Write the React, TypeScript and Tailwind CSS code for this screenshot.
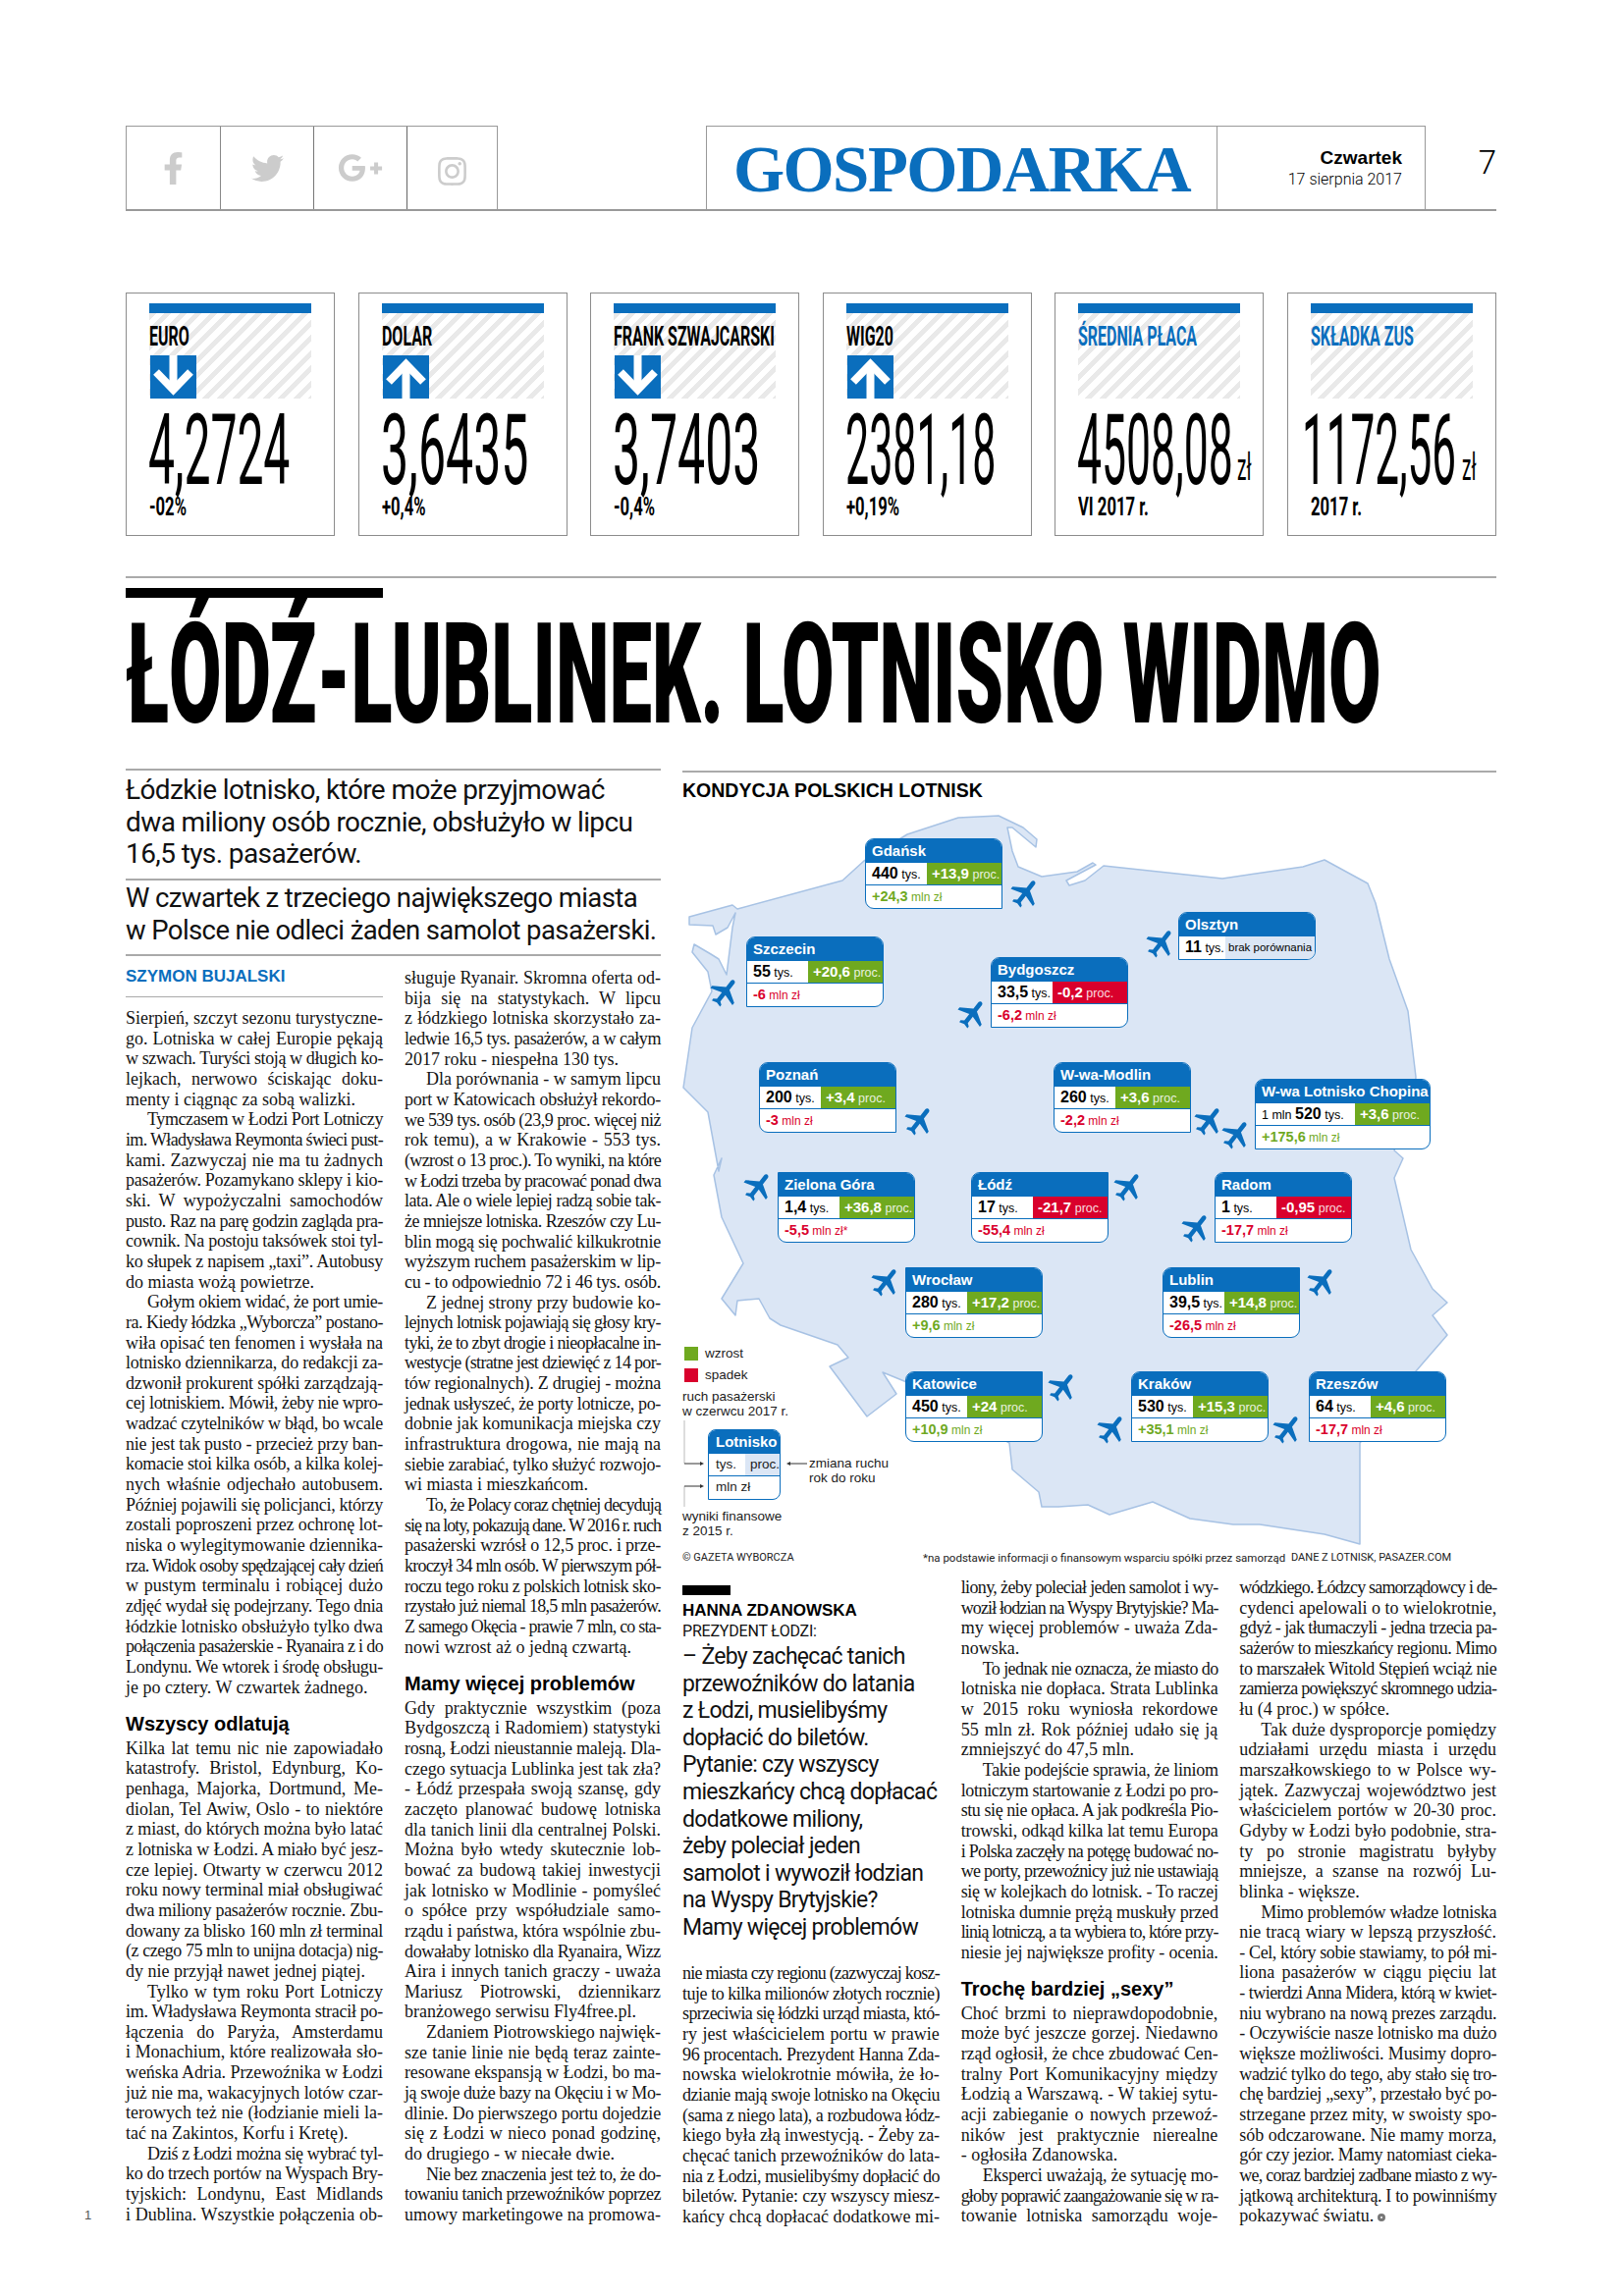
import { useLayoutEffect, useRef } from 'react';
import { FaFacebookF, FaGooglePlusG, FaInstagram, FaTwitter } from 'react-icons/fa';
import { MdFlight } from 'react-icons/md';

const COLUMN_1 = `Sierpień, szczyt sezonu turystyczne-
go. Lotniska w całej Europie pękają
w szwach. Turyści stoją w długich ko-
lejkach, nerwowo ściskając doku-
menty i ciągnąc za sobą walizki.$
>Tymczasem w Łodzi Port Lotniczy
im. Władysława Reymonta świeci pust-
kami. Zazwyczaj nie ma tu żadnych
pasażerów. Pozamykano sklepy i kio-
ski. W wypożyczalni samochodów
pusto. Raz na parę godzin zagląda pra-
cownik. Na postoju taksówek stoi tyl-
ko słupek z napisem „taxi”. Autobusy
do miasta wożą powietrze.$
>Gołym okiem widać, że port umie-
ra. Kiedy łódzka „Wyborcza” postano-
wiła opisać ten fenomen i wysłała na
lotnisko dziennikarza, do redakcji za-
dzwonił prokurent spółki zarządzają-
cej lotniskiem. Mówił, żeby nie wpro-
wadzać czytelników w błąd, bo wcale
nie jest tak pusto - przecież przy ban-
komacie stoi kilka osób, a kilka kolej-
nych właśnie odjechało autobusem.
Później pojawili się policjanci, którzy
zostali poproszeni przez ochronę lot-
niska o wylegitymowanie dziennika-
rza. Widok osoby spędzającej cały dzień
w pustym terminalu i robiącej dużo
zdjęć wydał się podejrzany. Tego dnia
łódzkie lotnisko obsłużyło tylko dwa
połączenia pasażerskie - Ryanaira z i do
Londynu. We wtorek i środę obsługu-
je po cztery. W czwartek żadnego.$
## Wszyscy odlatują
Kilka lat temu nic nie zapowiadało
katastrofy. Bristol, Edynburg, Ko-
penhaga, Majorka, Dortmund, Me-
diolan, Tel Awiw, Oslo - to niektóre
z miast, do których można było latać
z lotniska w Łodzi. A miało być jesz-
cze lepiej. Otwarty w czerwcu 2012
roku nowy terminal miał obsługiwać
dwa miliony pasażerów rocznie. Zbu-
dowany za blisko 160 mln zł terminal
(z czego 75 mln to unijna dotacja) nig-
dy nie przyjął nawet jednej piątej.$
>Tylko w tym roku Port Lotniczy
im. Władysława Reymonta stracił po-
łączenia do Paryża, Amsterdamu
i Monachium, które realizowała sło-
weńska Adria. Przewoźnika w Łodzi
już nie ma, wakacyjnych lotów czar-
terowych też nie (łodzianie mieli la-
tać na Zakintos, Korfu i Kretę).$
>Dziś z Łodzi można się wybrać tyl-
ko do trzech portów na Wyspach Bry-
tyjskich: Londynu, East Midlands
i Dublina. Wszystkie połączenia ob-`;

const COLUMN_2 = `sługuje Ryanair. Skromna oferta od-
bija się na statystykach. W lipcu
z łódzkiego lotniska skorzystało za-
ledwie 16,5 tys. pasażerów, a w całym
2017 roku - niespełna 130 tys.$
>Dla porównania - w samym lipcu
port w Katowicach obsłużył rekordo-
we 539 tys. osób (23,9 proc. więcej niż
rok temu), a w Krakowie - 553 tys.
(wzrost o 13 proc.). To wyniki, na które
w Łodzi trzeba by pracować ponad dwa
lata. Ale o wiele lepiej radzą sobie tak-
że mniejsze lotniska. Rzeszów czy Lu-
blin mogą się pochwalić kilkukrotnie
wyższym ruchem pasażerskim w lip-
cu - to odpowiednio 72 i 46 tys. osób.$
>Z jednej strony przy budowie ko-
lejnych lotnisk pojawiają się głosy kry-
tyki, że to zbyt drogie i nieopłacalne in-
westycje (stratne jest dziewięć z 14 por-
tów regionalnych). Z drugiej - można
jednak usłyszeć, że porty lotnicze, po-
dobnie jak komunikacja miejska czy
infrastruktura drogowa, nie mają na
siebie zarabiać, tylko służyć rozwojo-
wi miasta i mieszkańcom.$
>To, że Polacy coraz chętniej decydują
się na loty, pokazują dane. W 2016 r. ruch
pasażerski wzrósł o 12,5 proc. i prze-
kroczył 34 mln osób. W pierwszym pół-
roczu tego roku z polskich lotnisk sko-
rzystało już niemal 18,5 mln pasażerów.
Z samego Okęcia - prawie 7 mln, co sta-
nowi wzrost aż o jedną czwartą.$
## Mamy więcej problemów
Gdy praktycznie wszystkim (poza
Bydgoszczą i Radomiem) statystyki
rosną, Łodzi nieustannie maleją. Dla-
czego sytuacja Lublinka jest tak zła?
- Łódź przespała swoją szansę, gdy
zaczęto planować budowę lotniska
dla tanich linii dla centralnej Polski.
Można było wtedy skutecznie lob-
bować za budową takiej inwestycji
jak lotnisko w Modlinie - pomyśleć
o spółce przy współudziale samo-
rządu i państwa, która wspólnie zbu-
dowałaby lotnisko dla Ryanaira, Wizz
Aira i innych tanich graczy - uważa
Mariusz Piotrowski, dziennikarz
branżowego serwisu Fly4free.pl.$
>Zdaniem Piotrowskiego najwięk-
sze tanie linie nie będą teraz zainte-
resowane ekspansją w Łodzi, bo ma-
ją swoje duże bazy na Okęciu i w Mo-
dlinie. Do pierwszego portu dojedzie
się z Łodzi w nieco ponad godzinę,
do drugiego - w niecałe dwie.$
>Nie bez znaczenia jest też to, że do-
towaniu tanich przewoźników poprzez
umowy marketingowe na promowa-`;

const COLUMN_3 = `nie miasta czy regionu (zazwyczaj kosz-
tuje to kilka milionów złotych rocznie)
sprzeciwia się łódzki urząd miasta, któ-
ry jest właścicielem portu w prawie
96 procentach. Prezydent Hanna Zda-
nowska wielokrotnie mówiła, że ło-
dzianie mają swoje lotnisko na Okęciu
(sama z niego lata), a rozbudowa łódz-
kiego była złą inwestycją. - Żeby za-
chęcać tanich przewoźników do lata-
nia z Łodzi, musielibyśmy dopłacić do
biletów. Pytanie: czy wszyscy miesz-
kańcy chcą dopłacać dodatkowe mi-`;

const COLUMN_4 = `liony, żeby poleciał jeden samolot i wy-
woził łodzian na Wyspy Brytyjskie? Ma-
my więcej problemów - uważa Zda-
nowska.$
>To jednak nie oznacza, że miasto do
lotniska nie dopłaca. Strata Lublinka
w 2015 roku wyniosła rekordowe
55 mln zł. Rok później udało się ją
zmniejszyć do 47,5 mln.$
>Takie podejście sprawia, że liniom
lotniczym startowanie z Łodzi po pro-
stu się nie opłaca. A jak podkreśla Pio-
trowski, odkąd kilka lat temu Europa
i Polska zaczęły na potęgę budować no-
we porty, przewoźnicy już nie ustawiają
się w kolejkach do lotnisk. - To raczej
lotniska dumnie prężą muskuły przed
linią lotniczą, a ta wybiera to, które przy-
niesie jej największe profity - ocenia.$
## Trochę bardziej „sexy”
Choć brzmi to nieprawdopodobnie,
może być jeszcze gorzej. Niedawno
rząd ogłosił, że chce zbudować Cen-
tralny Port Komunikacyjny między
Łodzią a Warszawą. - W takiej sytu-
acji zabieganie o nowych przewoź-
ników jest praktycznie nierealne
- ogłosiła Zdanowska.$
>Eksperci uważają, że sytuację mo-
głoby poprawić zaangażowanie się w ra-
towanie lotniska samorządu woje-`;

const COLUMN_5 = `wódzkiego. Łódzcy samorządowcy i de-
cydenci apelowali o to wielokrotnie,
gdyż - jak tłumaczyli - jedna trzecia pa-
sażerów to mieszkańcy regionu. Mimo
to marszałek Witold Stępień wciąż nie
zamierza powiększyć skromnego udzia-
łu (4 proc.) w spółce.$
>Tak duże dysproporcje pomiędzy
udziałami urzędu miasta i urzędu
marszałkowskiego to w Polsce wy-
jątek. Zazwyczaj województwo jest
właścicielem portów w 20-30 proc.
Gdyby w Łodzi było podobnie, stra-
ty po stronie magistratu byłyby
mniejsze, a szanse na rozwój Lu-
blinka - większe.$
>Mimo problemów władze lotniska
nie tracą wiary w lepszą przyszłość.
- Cel, który sobie stawiamy, to pół mi-
liona pasażerów w ciągu pięciu lat
- twierdzi Anna Midera, którą w kwiet-
niu wybrano na nową prezes zarządu.
- Oczywiście nasze lotnisko ma dużo
większe możliwości. Musimy dopro-
wadzić tylko do tego, aby stało się tro-
chę bardziej „sexy”, przestało być po-
strzegane przez mity, w swoisty spo-
sób odczarowane. Nie mamy morza,
gór czy jezior. Mamy natomiast cieka-
we, coraz bardziej zadbane miasto z wy-
jątkową architekturą. I to powinniśmy
pokazywać światu.$`;

const TICKERS = [
  { label: 'EURO', blue: false, arrow: 'down', value: '4,2724', fit: 'scale-x-[0.48]', sub: '-02%' },
  { label: 'DOLAR', blue: false, arrow: 'up', value: '3,6435', fit: 'scale-x-[0.5]', sub: '+0,4%' },
  { label: 'FRANK SZWAJCARSKI', blue: false, arrow: 'down', value: '3,7403', fit: 'scale-x-[0.5]', sub: '-0,4%' },
  { label: 'WIG20', blue: false, arrow: 'up', value: '2381,18', fit: 'scale-x-[0.43]', sub: '+0,19%' },
  { label: 'ŚREDNIA PŁACA', blue: true, value: '4508,08', fit: 'scale-x-[0.445]', unit: true, sub: 'VI 2017 r.' },
  { label: 'SKŁADKA ZUS', blue: true, value: '1172,56', fit: 'scale-x-[0.44]', unit: true, sub: '2017 r.', shift: true },
];

const AIRPORTS = [
  { name: 'Gdańsk', tys: '440', change: '+13,9', up: true, money: '+24,3', gain: true, pos: 'left-[186px] top-[22px]', corners: 'rounded-t-[9px] rounded-bl-[9px]', plane: 'left-[332px] top-[60px]' },
  { name: 'Szczecin', tys: '55', change: '+20,6', up: true, money: '-6', gain: false, pos: 'left-[65px] top-[122px]', corners: 'rounded-t-[9px] rounded-br-[9px]', plane: 'left-[26px] top-[161px]' },
  { name: 'Bydgoszcz', tys: '33,5', change: '-0,2', up: false, money: '-6,2', gain: false, pos: 'left-[314px] top-[143px]', corners: 'rounded-t-[9px] rounded-br-[9px]', plane: 'left-[278px] top-[183px]' },
  { name: 'Poznań', tys: '200', change: '+3,4', up: true, money: '-3', gain: false, pos: 'left-[78px] top-[250px]', corners: 'rounded-t-[9px] rounded-bl-[9px]', plane: 'left-[224px] top-[292px]' },
  { name: 'W-wa-Modlin', tys: '260', change: '+3,6', up: true, money: '-2,2', gain: false, pos: 'left-[378px] top-[250px]', corners: 'rounded-t-[9px] rounded-bl-[9px]', plane: 'left-[519px] top-[292px]' },
  { name: 'Zielona Góra', tys: '1,4', change: '+36,8', up: true, money: '-5,5', star: true, gain: false, pos: 'left-[97px] top-[362px]', corners: 'rounded-tr-[9px] rounded-b-[9px]', plane: 'left-[60px] top-[359px]' },
  { name: 'Łódź', tys: '17', change: '-21,7', up: false, money: '-55,4', gain: false, pos: 'left-[294px] top-[362px]', corners: 'rounded-tl-[9px] rounded-b-[9px]', plane: 'left-[437px] top-[359px]' },
  { name: 'Radom', tys: '1', change: '-0,95', up: false, money: '-17,7', gain: false, pos: 'left-[542px] top-[362px]', corners: 'rounded-t-[9px] rounded-br-[9px]', plane: 'left-[506px] top-[401px]' },
  { name: 'Wrocław', tys: '280', change: '+17,2', up: true, money: '+9,6', gain: true, pos: 'left-[227px] top-[459px]', corners: 'rounded-tr-[9px] rounded-b-[9px]', plane: 'left-[190px] top-[456px]' },
  { name: 'Lublin', tys: '39,5', change: '+14,8', up: true, money: '-26,5', gain: false, pos: 'left-[489px] top-[459px]', corners: 'rounded-tl-[9px] rounded-b-[9px]', plane: 'left-[634px] top-[456px]' },
  { name: 'Katowice', tys: '450', change: '+24', up: true, money: '+10,9', gain: true, pos: 'left-[227px] top-[565px]', corners: 'rounded-tl-[9px] rounded-b-[9px]', plane: 'left-[370px] top-[563px]' },
  { name: 'Kraków', tys: '530', change: '+15,3', up: true, money: '+35,1', gain: true, pos: 'left-[457px] top-[565px]', corners: 'rounded-t-[9px] rounded-br-[9px]', plane: 'left-[420px] top-[606px]' },
  { name: 'Rzeszów', tys: '64', change: '+4,6', up: true, money: '-17,7', gain: false, pos: 'left-[638px] top-[565px]', corners: 'rounded-t-[9px] rounded-br-[9px]', plane: 'left-[599px] top-[606px]' },
];

const POLAND =
  '702,934 746,922 751,926 858,897 880,877 924,850 976,833 1017,831 1042,843 1056,855 1055,863 1031,843 1026,843 1031,867 1037,883 1061,893 1097,888 1113,879 1116,881 1086,897 1089,902 1105,897 1124,882 1245,895 1327,883 1349,876 1360,882 1393,900 1401,920 1415,977 1434,1030 1442,1097 1440,1130 1420,1172 1429,1180 1420,1200 1437,1273 1459,1313 1474,1327 1459,1340 1474,1360 1448,1390 1442,1397 1385,1470 1385,1573 1349,1563 1283,1553 1256,1553 1212,1547 1174,1530 1130,1543 1108,1533 1078,1535 1061,1535 1058,1520 1031,1497 1028,1470 921,1407 899,1398 913,1420 883,1443 845,1392 864,1383 853,1370 795,1350 784,1343 773,1323 751,1325 749,1340 735,1323 757,1287 735,1240 727,1197 735,1180 732,1193 721,1133 696,1108 705,1047 725,1010 721,990 705,970 707,962 724,972 732,977 740,993 746,945 749,930 741,945 729,952 726,943 702,942';

function Line({ text, last, indent, mark }: { text: string; last: boolean; indent: boolean; mark: boolean }) {
  const ref = useRef<HTMLSpanElement>(null);

  // squeeze the lines that would not fit the column, as a typesetter does
  useLayoutEffect(() => {
    const span = ref.current;
    if (!span || !span.parentElement) return;
    const room = span.parentElement.clientWidth - (indent ? 22 : 0);
    const over = span.getBoundingClientRect().width - room;
    if (over > 0) span.style.letterSpacing = `${-over / text.length}px`;
  }, [text, indent]);

  return (
    <div
      className={`h-[20.67px] whitespace-nowrap ${indent ? 'pl-[22px]' : ''} ${
        last ? 'text-left' : 'text-justify [text-align-last:justify]'
      }`}
    >
      <span ref={ref}>{text}</span>
      {mark && <span className="ml-[4px] inline-block size-[8px] rounded-full border-[3px] border-[#777]" />}
    </div>
  );
}

function Column({ text, end }: { text: string; end?: boolean }) {
  const lines = text.split('\n');

  return (
    <div className="font-['Liberation_Serif',serif] text-[18px] leading-[20.67px] text-[#141414]">
      {lines.map((line, i) => {
        if (line.startsWith('## ')) {
          return (
            <div key={i} className="flex h-[41.34px] items-end pb-[3px] font-['Liberation_Sans',sans-serif] text-[20px] leading-[24px] font-bold text-black">
              {line.slice(3)}
            </div>
          );
        }
        const indent = line.startsWith('>');
        const last = line.endsWith('$');
        return (
          <Line
            key={i}
            text={line.replace(/^>/, '').replace(/\$$/, '')}
            last={last}
            indent={indent}
            mark={!!end && i === lines.length - 1}
          />
        );
      })}
    </div>
  );
}

function ArrowBox({ dir }: { dir: string }) {
  return (
    <svg viewBox="0 0 47 44" className={`ml-[1px] mt-[5px] h-[44px] w-[47px] ${dir === 'up' ? 'rotate-180' : ''}`}>
      <rect width="47" height="44" fill="#0a6ebd" />
      <rect x="19.5" width="8" height="30" fill="#fff" />
      <path d="M6 17 L23.5 35 L41 17" fill="none" stroke="#fff" strokeWidth="8" />
    </svg>
  );
}

function Ticker({ t }: { t: (typeof TICKERS)[number] }) {
  return (
    <div className="h-[248px] w-[213px] border border-[#8c8c8c] pl-[23px] pt-[10px] font-['Roboto',sans-serif] text-black">
      <div className="h-[10px] w-[165px] bg-[#0a6ebd]" />
      <div className="h-[87px] w-[165px] bg-[repeating-linear-gradient(135deg,#e9e9e9_0_5px,#fff_5px_11px)] pt-[10px]">
        <div className={`h-[28px] origin-left scale-x-[0.57] whitespace-nowrap text-[28px] leading-[28px] font-bold ${t.blue ? 'text-[#0a6ebd]' : 'text-black'}`}>
          {t.label}
        </div>
        {t.arrow && <ArrowBox dir={t.arrow} />}
      </div>
      <div className={`mt-[10px] flex h-[86px] items-end ${t.shift ? '-ml-[9px]' : '-ml-[1px]'}`}>
        <div className="w-[163px] shrink-0">
          <div className={`origin-left whitespace-nowrap text-[100px] leading-[86px] ${t.fit}`}>{t.value}</div>
        </div>
        {t.unit && <div className="origin-left scale-x-[0.5] pb-[7px] text-[38px] leading-[38px]">zł</div>}
      </div>
      <div className="mt-[1px] h-[26px] origin-left scale-x-[0.64] whitespace-nowrap text-[26px] leading-[26px] font-bold">{t.sub}</div>
    </div>
  );
}

function Card({ a }: { a: (typeof AIRPORTS)[number] }) {
  return (
    <div className={`absolute w-[140px] overflow-hidden border border-[#0a6ebd] bg-white ${a.pos} ${a.corners}`}>
      <div className="h-[24px] bg-[#0a6ebd] pl-[6px] text-[15px] leading-[24px] font-bold text-white">{a.name}</div>
      <div className="flex h-[23px] border-b border-[#0a6ebd]">
        <div className="w-[62px] pl-[6px] text-[12.5px] leading-[22px] text-black">
          <b className="text-[16px]">{a.tys}</b> tys.
        </div>
        <div className={`flex-1 pl-[5px] text-[12.5px] leading-[22px] text-white ${a.up ? 'bg-[#6fa91f]' : 'bg-[#d9002c]'}`}>
          <b className="text-[15px]">{a.change}</b> <span className="opacity-85">proc.</span>
        </div>
      </div>
      <div className={`h-[23px] pl-[6px] text-[12px] leading-[23px] ${a.gain ? 'text-[#6fa91f]' : 'text-[#d9002c]'}`}>
        <b className="text-[14.5px]">{a.money}</b> mln zł{a.star ? '*' : ''}
      </div>
    </div>
  );
}

function Plane({ pos }: { pos: string }) {
  return <MdFlight className={`absolute size-[36px] rotate-[38deg] text-[#0a6ebd] ${pos}`} />;
}

function Legend() {
  return (
    <div className="absolute left-0 top-[539px] w-[210px] text-[13.5px] leading-[15px] text-[#1c1c1c]">
      <div className="ml-[2px] flex items-center gap-[7px]">
        <span className="size-[14px] bg-[#6fa91f]" />
        wzrost
      </div>
      <div className="ml-[2px] mt-[7px] flex items-center gap-[7px]">
        <span className="size-[14px] bg-[#d9002c]" />
        spadek
      </div>
      <div className="mt-[7px]">
        ruch pasażerski
        <br />w czerwcu 2017 r.
      </div>
      <div className="relative mt-[11px] flex h-[72px] pl-[26px]">
        <div className="w-[76px] overflow-hidden rounded-t-[8px] rounded-br-[8px] border border-[#0a6ebd]">
          <div className="h-[24px] bg-[#0a6ebd] pl-[7px] text-[15px] leading-[24px] font-bold text-white">Lotnisko</div>
          <div className="flex h-[23px] border-b border-[#0a6ebd] leading-[22px]">
            <div className="w-[38px] pl-[7px]">tys.</div>
            <div className="flex-1 bg-[#dbe6f5] pl-[5px]">proc.</div>
          </div>
          <div className="pl-[7px] leading-[22px]">mln zł</div>
        </div>
        <div className="ml-[29px] mt-[27px] whitespace-nowrap">
          zmiana ruchu
          <br />
          rok do roku
        </div>
      </div>
      <div className="mt-[9px]">
        wyniki finansowe
        <br />z 2015 r.
      </div>
      <svg className="absolute left-0 top-[76px] h-[96px] w-[130px]" viewBox="0 0 130 96" fill="none">
        <path d="M2 0 V44" stroke="#bbb" />
        <path d="M2 88 V67" stroke="#bbb" />
        <path d="M2 44 H18M2 67 H18M127 44 H110" stroke="#333" />
        <path d="M18 42 L22 44 L18 46ZM18 65 L22 67 L18 69ZM110 42 L106 44 L110 46Z" fill="#333" />
      </svg>
    </div>
  );
}

export default function App() {
  return (
    <div className="relative h-[2339px] w-[1653px] overflow-hidden bg-white pl-[128px] pt-[128px] font-['Liberation_Sans',sans-serif]">
      <div className="w-[1396px]">
        {/* section header */}
        <header className="flex h-[87px] border-b-2 border-[#999]">
          <div className="flex w-[379px] border-x border-t border-[#999] text-[#ccc]">
            <div className="flex w-[95px] items-center justify-center"><FaFacebookF size={33} /></div>
            <div className="flex w-[95px] items-center justify-center border-l border-[#888]"><FaTwitter size={33} /></div>
            <div className="flex w-[95px] items-center justify-center border-l border-[#777]"><FaGooglePlusG size={46} /></div>
            <div className="flex flex-1 items-center justify-center border-l border-[#666] pt-[6px]"><FaInstagram size={33} /></div>
          </div>
          <div className="ml-[212px] flex w-[521px] items-center justify-center border-x border-t border-[#999] pt-[3px]">
            <span className="font-['Liberation_Serif',serif] text-[67px] leading-[67px] font-bold tracking-[-1.5px] text-[#0a6ebd]">GOSPODARKA</span>
          </div>
          <div className="w-[212px] border-r border-t border-[#999] pr-[23px] pt-[21px] text-right">
            <div className="text-[19px] leading-[22px] font-bold">Czwartek</div>
            <div className="font-['Roboto',sans-serif] text-[16px] leading-[22px] font-light">17 sierpnia 2017</div>
          </div>
          <div className="flex-1 pt-[18px] text-right font-['Roboto',sans-serif] text-[33px] leading-[40px] font-light">7</div>
        </header>

        {/* tickers */}
        <div className="mt-[83px] flex justify-between">
          {TICKERS.map((t) => (
            <Ticker key={t.label} t={t} />
          ))}
        </div>

        <div className="mt-[41px] h-[2px] bg-[#aaa]" />
        <div className="mt-[10px] h-[10px] w-[262px] bg-black" />
        <h1 className="h-[174px] origin-left scale-x-[0.547] whitespace-nowrap pt-[8px] font-['Roboto',sans-serif] text-[142px] leading-[142px] font-black text-black">
          ŁÓDŹ-LUBLINEK. LOTNISKO WIDMO
        </h1>

        <div className="flex gap-[22px]">
          {/* lede and article */}
          <div className="w-[545px]">
            <div className="border-t-2 border-[#aaa] pb-[8.5px] pt-[4px] font-['Roboto',sans-serif] text-[28px] leading-[32.5px] tracking-[-0.6px] whitespace-nowrap text-[#111]">
              Łódzkie lotnisko, które może przyjmować
              <br />
              dwa miliony osób rocznie, obsłużyło w lipcu
              <br />
              16,5 tys. pasażerów.
            </div>
            <div className="border-t-2 border-[#aaa] pb-[8px] pt-[2px] font-['Roboto',sans-serif] text-[27.5px] leading-[32.5px] tracking-[-0.6px] whitespace-nowrap text-[#111]">
              W czwartek z trzeciego największego miasta
              <br />w Polsce nie odleci żaden samolot pasażerski.
            </div>
            <div className="flex gap-[22px] border-t-2 border-[#aaa]">
              <div className="w-[262px]">
                <div className="mb-[11px] h-[42px] border-b border-[#aaa] pt-[11px] text-[17px] leading-[20px] font-bold text-[#0a6ebd]">SZYMON BUJALSKI</div>
                <Column text={COLUMN_1} />
              </div>
              <div className="w-[261px] pt-[12px]">
                <Column text={COLUMN_2} />
              </div>
            </div>
          </div>

          {/* graphic and the rest of the article */}
          <div className="w-[829px]">
            <div className="mt-[2px] h-[47px] border-t-2 border-[#aaa] pt-[7px] text-[19.5px] leading-[22px] font-bold text-black">KONDYCJA POLSKICH LOTNISK</div>

            <div className="relative h-[745px]">
              <svg className="absolute inset-0 overflow-visible" width="830" height="745" viewBox="695 832 830 745">
                <polygon points={POLAND} fill="#dbe6f5" stroke="#a7c2e4" strokeWidth="1.5" strokeLinejoin="round" />
              </svg>
              {AIRPORTS.map((a) => (
                <Plane key={a.name} pos={a.plane} />
              ))}
              {AIRPORTS.map((a) => (
                <Card key={a.name} a={a} />
              ))}
              <Plane pos="left-[470px] top-[111px]" />
              <div className="absolute left-[505px] top-[97px] w-[140px] overflow-hidden rounded-t-[9px] rounded-br-[9px] border border-[#0a6ebd] bg-white">
                <div className="h-[24px] bg-[#0a6ebd] pl-[6px] text-[15px] leading-[24px] font-bold text-white">Olsztyn</div>
                <div className="flex h-[23px] text-black">
                  <div className="w-[47px] pl-[6px] text-[12.5px] leading-[22px]">
                    <b className="text-[16px]">11</b> tys.
                  </div>
                  <div className="flex-1 whitespace-nowrap bg-[#dbe6f5] pl-[3px] text-[11.5px] leading-[22px]">brak porównania</div>
                </div>
              </div>
              <Plane pos="left-[547px] top-[306px]" />
              <div className="absolute left-[583px] top-[267px] w-[179px] overflow-hidden rounded-t-[9px] rounded-br-[9px] border border-[#0a6ebd] bg-white">
                <div className="h-[24px] bg-[#0a6ebd] pl-[6px] text-[15px] leading-[24px] font-bold whitespace-nowrap text-white">W-wa Lotnisko Chopina</div>
                <div className="flex h-[23px] border-b border-[#0a6ebd]">
                  <div className="w-[101px] pl-[6px] text-[12.5px] leading-[22px] text-black">
                    1 mln <b className="text-[16px]">520</b> tys.
                  </div>
                  <div className="flex-1 bg-[#6fa91f] pl-[5px] text-[12.5px] leading-[22px] text-white">
                    <b className="text-[15px]">+3,6</b> <span className="opacity-85">proc.</span>
                  </div>
                </div>
                <div className="h-[23px] pl-[6px] text-[12px] leading-[23px] text-[#6fa91f]">
                  <b className="text-[14.5px]">+175,6</b> mln zł
                </div>
              </div>
              <Legend />
            </div>

            <div className="flex h-[20px] font-['Roboto',sans-serif] text-[11px] leading-[20px] whitespace-nowrap text-[#222]">
              <div className="w-[245px]">© GAZETA WYBORCZA</div>
              <div className="w-[375px] text-[11.5px]">*na podstawie informacji o finansowym wsparciu spółki przez samorząd</div>
              <div>DANE Z LOTNISK, PASAZER.COM</div>
            </div>

            <div className="mt-[10px] grid grid-cols-3 gap-x-[22px]">
              <div>
                <div className="h-[393px] pt-[8px]">
                  <div className="h-[10px] w-[49px] bg-black" />
                  <div className="mt-[6px] text-[17px] leading-[20px] font-bold">HANNA ZDANOWSKA</div>
                  <div className="font-['Roboto',sans-serif] text-[16px] leading-[22px] tracking-[-0.2px] whitespace-nowrap text-[#111]">PREZYDENT ŁODZI:</div>
                  <div className="mt-[1px] font-['Roboto',sans-serif] text-[23px] leading-[27.6px] tracking-[-0.7px] whitespace-nowrap text-[#111]">
                    – Żeby zachęcać tanich
                    <br />
                    przewoźników do latania
                    <br />
                    z Łodzi, musielibyśmy
                    <br />
                    dopłacić do biletów.
                    <br />
                    Pytanie: czy wszyscy
                    <br />
                    mieszkańcy chcą dopłacać
                    <br />
                    dodatkowe miliony,
                    <br />
                    żeby poleciał jeden
                    <br />
                    samolot i wywoził łodzian
                    <br />
                    na Wyspy Brytyjskie?
                    <br />
                    Mamy więcej problemów
                  </div>
                </div>
                <Column text={COLUMN_3} />
              </div>
              <Column text={COLUMN_4} />
              <Column text={COLUMN_5} end />
            </div>
          </div>
        </div>
      </div>

      <div className="absolute left-[86px] top-[2248px] text-[13px] leading-[18px] text-[#555]">1</div>
    </div>
  );
}
